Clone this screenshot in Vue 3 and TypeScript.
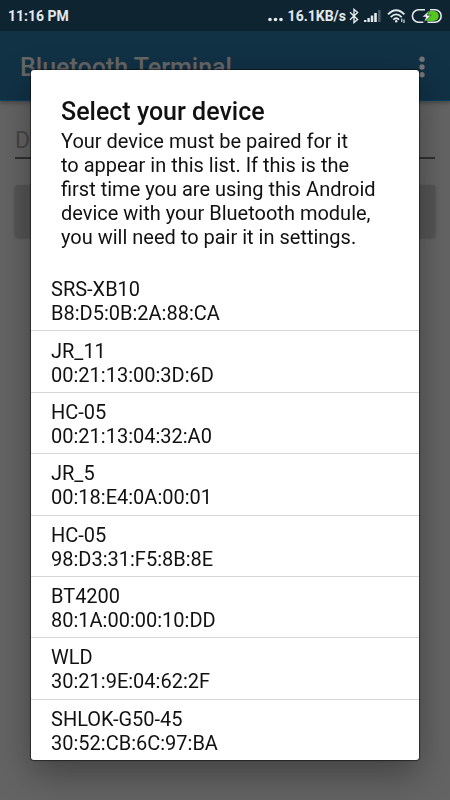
<script setup lang="ts">
interface Device {
  name: string
  address: string
}

const devices: Device[] = [
  { name: 'SRS-XB10', address: 'B8:D5:0B:2A:88:CA' },
  { name: 'JR_11', address: '00:21:13:00:3D:6D' },
  { name: 'HC-05', address: '00:21:13:04:32:A0' },
  { name: 'JR_5', address: '00:18:E4:0A:00:01' },
  { name: 'HC-05', address: '98:D3:31:F5:8B:8E' },
  { name: 'BT4200', address: '80:1A:00:00:10:DD' },
  { name: 'WLD', address: '30:21:9E:04:62:2F' },
  { name: 'SHLOK-G50-45', address: '30:52:CB:6C:97:BA' },
]
</script>

<template>
  <div class="screen">
    <header class="status">
      <span class="clock">11:16 PM</span>
      <div class="tray">
        <svg class="dots" width="16" height="16" viewBox="0 0 16 16" fill="#e4e9ec">
          <circle cx="2" cy="11.5" r="1.8" />
          <circle cx="7.5" cy="11.5" r="1.8" />
          <circle cx="13" cy="11.5" r="1.8" />
        </svg>
        <span class="speed">16.1KB/s</span>
        <svg class="bluetooth" width="10" height="16" viewBox="0 0 10 16" fill="none" stroke="#e4e9ec" stroke-width="1.4">
          <path d="M1 4.3 8.6 11.4 5 14.6V1.4L8.6 4.6 1 11.7" />
        </svg>
        <svg class="signal" width="18" height="16" viewBox="0 0 18 16" fill="#e4e9ec">
          <rect x="0" y="12" width="2.4" height="2" />
          <rect x="3.4" y="10" width="2.4" height="4" />
          <rect x="6.8" y="7.5" width="2.4" height="6.5" />
          <rect x="10.2" y="5" width="2.6" height="9" />
          <rect x="14" y="2" width="2.6" height="12" fill="#4a5c67" />
        </svg>
        <svg class="wifi" width="19" height="16" viewBox="0 0 19 16" fill="none" stroke="#e4e9ec" stroke-width="1.8">
          <path d="M1 6.4Q9.2-1.8 17.4 6.4" />
          <path d="M3.7 9.1Q9.2 3.7 14.7 9.1" />
          <path d="M6.3 11.7Q9.2 8.9 12.1 11.7" />
          <circle cx="9.2" cy="13.3" r="1.2" fill="#e4e9ec" stroke="none" />
          <path d="M14.8 10.6V14M17 11.6V15" stroke-width="1.1" />
        </svg>
        <svg class="battery" width="31" height="16" viewBox="0 0 31 16">
          <path d="M17 3H22.8A5 5 0 0 1 22.8 13H14.5Z" fill="#55c81e" />
          <path d="M14 1.8H7.6A6.2 6.2 0 0 0 7.6 14.2H12.5M19 1.8H24A6.2 6.2 0 0 1 24 14.2H16.5" fill="none" stroke="#e4e9ec" stroke-width="1.6" />
          <path d="M18.8 2 11.2 9H15L12.6 14.4 20.2 7.3H16.2Z" fill="#fff" stroke="#0e2431" stroke-width=".6" />
        </svg>
      </div>
    </header>

    <div class="appbar">
      <h1>Bluetooth Terminal</h1>
      <button class="more" type="button" aria-label="More options">
        <svg width="6" height="22" viewBox="0 0 6 22" fill="#747474">
          <circle cx="3" cy="3.3" r="2.7" />
          <circle cx="3" cy="11" r="2.7" />
          <circle cx="3" cy="18.7" r="2.7" />
        </svg>
      </button>
    </div>

    <main class="content">
      <input class="field" type="text" placeholder="Device" aria-label="Device" />
      <button class="connect" type="button" aria-label="Connect"></button>
    </main>

    <div class="overlay">
      <section class="dialog" role="dialog" aria-modal="true" aria-labelledby="dialog-title">
        <div class="intro">
          <h2 id="dialog-title">Select your device</h2>
          <p>Your device must be paired for it<br />to appear in this list. If this is the first time you are using this Android device with your Bluetooth module, you will need to pair it in settings.</p>
        </div>
        <ul class="devices">
          <li v-for="device in devices" :key="device.address">
            <button class="device" type="button">
              <span>{{ device.name }}</span>
              <span>{{ device.address }}</span>
            </button>
          </li>
        </ul>
      </section>
    </div>
  </div>
</template>

<style>
body {
  background: #646464;
}
</style>

<style scoped>
.screen {
  min-height: 100vh;
  background: #646464;
  font-family: Roboto, "Liberation Sans", sans-serif;
  color: #111;
}

.status {
  display: flex;
  align-items: center;
  justify-content: space-between;
  box-sizing: border-box;
  height: 31px;
  padding: 0 8px;
  background: #0e2431;
  color: #e4e9ec;
  font-size: 14px;
  font-weight: 700;
}

.tray {
  display: flex;
  align-items: center;
}

.tray svg {
  display: block;
}

.speed {
  margin: 0 3px 0 4px;
}

.signal {
  margin-left: 5px;
}

.wifi {
  margin: 0 5px;
}

.appbar {
  display: flex;
  align-items: center;
  justify-content: space-between;
  box-sizing: border-box;
  height: 70px;
  padding: 2px 16px 0 20px;
  border-bottom: 1px solid #06405f;
  background: #113145;
  box-shadow: 0 2px 4px rgba(0, 0, 0, 0.3);
}

h1 {
  margin: 0;
  padding-top: 3px;
  color: #666;
  font-size: 25px;
  line-height: 30px;
  font-weight: 500;
}

.more {
  display: flex;
  justify-content: center;
  width: 24px;
  padding: 0;
  border: 0;
  background: none;
}

.content {
  display: flex;
  flex-direction: column;
  gap: 26px;
  padding: 22px 15px;
}

.field {
  box-sizing: border-box;
  width: 100%;
  height: 36px;
  padding: 0;
  border: 0;
  border-bottom: 2px solid #303030;
  border-radius: 0;
  background: none;
  font: 23px/32px Roboto, sans-serif;
}

.field::placeholder {
  color: #464646;
  opacity: 1;
}

.connect {
  height: 52px;
  border: 0;
  border-radius: 3px;
  background: #555;
  box-shadow: 0 1px 3px rgba(0, 0, 0, 0.25);
}

.overlay {
  position: fixed;
  inset: 0;
  display: flex;
  padding: 70px 31px 40px;
}

.dialog {
  display: flex;
  flex: 1;
  flex-direction: column;
  overflow: hidden;
  border-radius: 3px;
  background: #fff;
  box-shadow: 0 0 1px 1px rgba(0, 0, 0, 0.5), 0 14px 36px rgba(0, 0, 0, 0.35);
}

.intro {
  padding: 27px 40px 21px 30px;
}

h2 {
  margin: 0 0 2px;
  font-size: 25px;
  line-height: 30px;
  font-weight: 500;
}

p {
  margin: 0;
  font-size: 20px;
  line-height: 24px;
}

.devices {
  display: flex;
  flex: 1;
  flex-direction: column;
  margin: 0;
  padding: 0;
  list-style: none;
}

.devices li {
  display: flex;
  flex: 1;
  box-sizing: border-box;
}

.devices li + li {
  border-top: 1px solid #d6d6d6;
}

.device {
  display: flex;
  flex: 1;
  flex-direction: column;
  justify-content: center;
  padding: 2px 20px 0;
  border: 0;
  background: none;
  color: inherit;
  font: 20px/24px Roboto, "Liberation Sans", sans-serif;
  text-align: left;
}
</style>
